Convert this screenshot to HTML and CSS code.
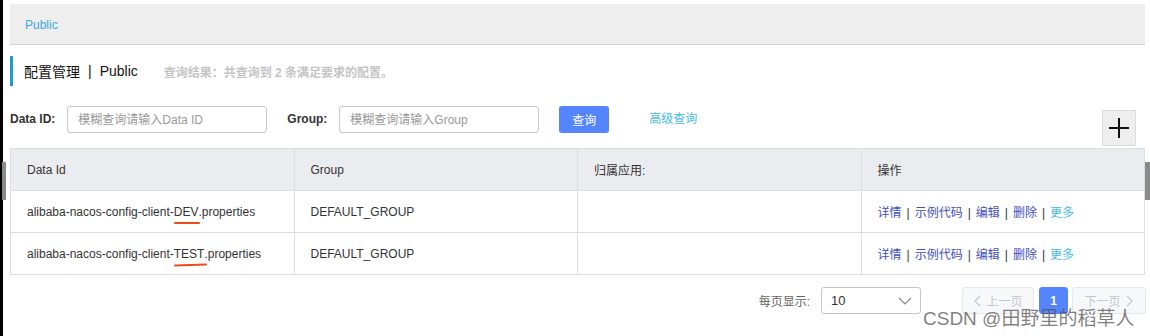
FILE: index.html
```html
<!DOCTYPE html>
<html lang="zh-CN">
<head>
  <meta charset="UTF-8">
  <meta name="viewport" content="width=device-width, initial-scale=1.0">
  <title>配置管理 | Public</title>
  <link rel="stylesheet" href="styles.css">
</head>
<body>
  <div class="page">
    <div class="crumb"><a href="#">Public</a></div>

    <div class="title">
      <span>配置管理</span><span class="title-sep">|</span><span>Public</span>
      <span class="result">查询结果：共查询到 2 条满足要求的配置。</span>
    </div>

    <div class="filters">
      <label class="filter-label">Data ID:</label>
      <input class="filter-input" type="text" placeholder="模糊查询请输入Data ID">
      <label class="filter-label group-label">Group:</label>
      <input class="filter-input" type="text" placeholder="模糊查询请输入Group">
      <button class="btn-primary">查询</button>
      <a class="adv-link" href="#">高级查询</a>
      <button class="btn-add" title="新建配置">
        <svg width="20" height="20" viewBox="0 0 20 20"><path d="M10 0v20M0 10h20" stroke="#111" stroke-width="2" fill="none"/></svg>
      </button>
    </div>

    <table class="config-table">
      <thead>
        <tr>
          <th>Data Id</th>
          <th>Group</th>
          <th>归属应用:</th>
          <th>操作</th>
        </tr>
      </thead>
      <tbody>
        <tr>
          <td>alibaba-nacos-config-client-<span class="mark">DEV</span>.properties</td>
          <td>DEFAULT_GROUP</td>
          <td></td>
          <td class="ops">
            <a href="#">详情</a><span class="sep">|</span><a href="#">示例代码</a><span class="sep">|</span><a href="#">编辑</a><span class="sep">|</span><a href="#">删除</a><span class="sep">|</span><a class="more" href="#">更多</a>
          </td>
        </tr>
        <tr>
          <td>alibaba-nacos-config-client-<span class="mark mark-tilt">TEST</span>.properties</td>
          <td>DEFAULT_GROUP</td>
          <td></td>
          <td class="ops">
            <a href="#">详情</a><span class="sep">|</span><a href="#">示例代码</a><span class="sep">|</span><a href="#">编辑</a><span class="sep">|</span><a href="#">删除</a><span class="sep">|</span><a class="more" href="#">更多</a>
          </td>
        </tr>
      </tbody>
    </table>

    <div class="pager">
      <span class="pager-label">每页显示:</span>
      <div class="page-size">
        <span>10</span>
        <svg width="14" height="8" viewBox="0 0 14 8"><path d="M1 1l6 6 6-6" stroke="#888" stroke-width="1.2" fill="none"/></svg>
      </div>
      <button class="page-btn prev" disabled>
        <svg width="8" height="12" viewBox="0 0 8 12"><path d="M7 1L2 6l5 5" stroke="#c4c6cf" stroke-width="1.2" fill="none"/></svg>上一页
      </button>
      <button class="page-btn current">1</button>
      <button class="page-btn next" disabled>
        下一页<svg width="8" height="12" viewBox="0 0 8 12"><path d="M1 1l5 5-5 5" stroke="#c4c6cf" stroke-width="1.2" fill="none"/></svg>
      </button>
    </div>
  </div>

  <div class="scroll-thumb thumb-left"></div>
  <div class="scroll-thumb thumb-right"></div>
  <div class="watermark">CSDN @田野里的稻草人</div>
</body>
</html>
```

FILE: styles.css
```css
body {
  margin: 0;
  min-height: 336px;
  box-sizing: border-box;
  border-left: 3px solid #000;
  background: #fff;
  font-family: "Liberation Sans", "Noto Sans CJK SC", sans-serif;
  color: #333;
}
.page {
  padding: 4px 5px 0 7px;
}
.crumb {
  height: 39px;
  line-height: 41px;
  padding-top: 1px;
  padding-left: 15px;
  background: #eeeeee;
  border-bottom: 1px solid #d2d2d2;
  font-size: 12px;
}
.crumb a {
  color: #3ea8dc;
  text-decoration: none;
}
.title {
  display: flex;
  align-items: center;
  height: 30px;
  margin-top: 11px;
  padding-left: 11px;
  border-left: 3px solid #1f9bd4;
  font-size: 14px;
  color: #111;
}
.title-sep {
  margin: 0 8px;
}
.result {
  margin-left: 26px;
  font-size: 12px;
  font-weight: bold;
  color: #c4c4c4;
}
.filters {
  display: flex;
  align-items: flex-start;
  margin-top: 20px;
}
.filter-label {
  margin-right: 12px;
  line-height: 27px;
  font-size: 12px;
  font-weight: bold;
  color: #333;
}
.group-label {
  margin-left: 20px;
}
.filter-input {
  width: 200px;
  height: 27px;
  box-sizing: border-box;
  padding: 0 10px;
  border: 1px solid #c4c6cf;
  border-radius: 3px;
  font-family: inherit;
  font-size: 12px;
  outline: none;
}
.filter-input::placeholder {
  color: #999;
}
.btn-primary {
  width: 50px;
  height: 27px;
  margin-left: 20px;
  border: 0;
  border-radius: 3px;
  background: #5584ff;
  color: #fff;
  font-family: inherit;
  font-size: 12px;
}
.adv-link {
  margin-left: 40px;
  line-height: 27px;
  font-size: 12px;
  color: #45bde3;
  text-decoration: none;
}
.btn-add {
  display: flex;
  align-items: center;
  justify-content: center;
  width: 34px;
  height: 36px;
  margin: 4px 9px 0 auto;
  padding: 0;
  background: #eeeeee;
  border: 1px solid #dcdcdc;
}
.config-table {
  width: 100%;
  margin-top: 2px;
  border-collapse: collapse;
  table-layout: fixed;
  font-size: 12px;
  color: #333;
}
.config-table th,
.config-table td {
  height: 41px;
  padding: 0 16px;
  border: 1px solid #dcdee3;
  text-align: left;
  font-weight: normal;
  white-space: nowrap;
}
.config-table th {
  background: #ebecf0;
}
.mark {
  position: relative;
}
.mark::after {
  content: "";
  position: absolute;
  left: 0;
  right: -2px;
  bottom: -5px;
  height: 2px;
  border-radius: 2px;
  background: #ee4a1c;
}
.mark-tilt::after {
  transform: rotate(-2deg);
}
.ops a {
  color: #3f4fbf;
  text-decoration: none;
}
.ops a.more {
  color: #45bde3;
}
.ops .sep {
  margin: 0 5px;
  color: #333;
}
.pager {
  display: flex;
  align-items: center;
  justify-content: flex-end;
  margin: 12px -1px 0 0;
  font-size: 12px;
}
.pager-label {
  color: #666;
}
.page-size {
  display: flex;
  align-items: center;
  justify-content: space-between;
  width: 100px;
  height: 27px;
  box-sizing: border-box;
  margin-left: 11px;
  padding: 0 8px 0 9px;
  border: 1px solid #c4c6cf;
  border-radius: 3px;
  font-size: 13px;
  color: #333;
}
.page-btn {
  display: flex;
  align-items: center;
  justify-content: center;
  gap: 5px;
  height: 27px;
  box-sizing: border-box;
  padding: 0;
  border: 1px solid #e6e7eb;
  border-radius: 3px;
  background: #f7f8fa;
  color: #c4c6cf;
  font-family: inherit;
  font-size: 12px;
}
.prev {
  width: 72px;
  margin-left: 41px;
}
.current {
  width: 29px;
  margin-left: 5px;
  border-color: #5584ff;
  background: #5584ff;
  color: #fff;
  font-weight: bold;
}
.next {
  width: 74px;
  margin-left: 4px;
}
.scroll-thumb {
  position: absolute;
  top: 162px;
  height: 38px;
  background: #8a8a8a;
}
.thumb-left {
  left: 2px;
  width: 4px;
}
.thumb-right {
  right: 0;
  width: 5px;
}
.watermark {
  position: absolute;
  left: 923px;
  top: 303px;
  font-size: 19px;
  color: rgba(85, 85, 85, 0.75);
  white-space: nowrap;
  pointer-events: none;
}
```
